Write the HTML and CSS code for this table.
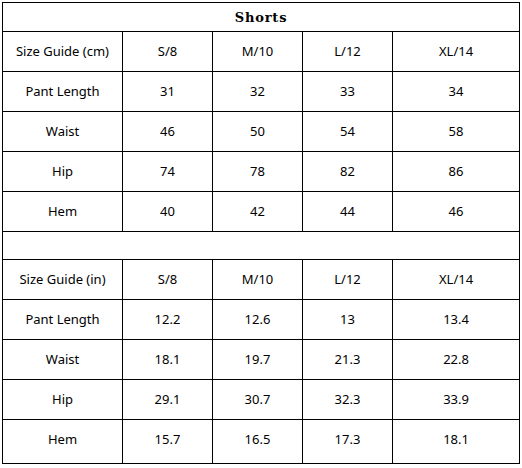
FILE: index.html
```html
<!DOCTYPE html>
<html>
<head>
<meta charset="utf-8">
<link rel="stylesheet" href="styles.css">
</head>
<body>
<div class="sheet">
<table class="size-table">
  <colgroup>
    <col class="c1"><col class="c2"><col class="c3"><col class="c4"><col class="c5">
  </colgroup>
  <tr class="title-row"><td colspan="5" class="title">Shorts</td></tr>
  <tr class="row"><td>Size Guide (cm)</td><td>S/8</td><td>M/10</td><td>L/12</td><td>XL/14</td></tr>
  <tr class="row"><td>Pant Length</td><td>31</td><td>32</td><td>33</td><td>34</td></tr>
  <tr class="row"><td>Waist</td><td>46</td><td>50</td><td>54</td><td>58</td></tr>
  <tr class="row"><td>Hip</td><td>74</td><td>78</td><td>82</td><td>86</td></tr>
  <tr class="row"><td>Hem</td><td>40</td><td>42</td><td>44</td><td>46</td></tr>
  <tr class="blank-row"><td colspan="5"></td></tr>
  <tr class="row"><td>Size Guide (in)</td><td>S/8</td><td>M/10</td><td>L/12</td><td>XL/14</td></tr>
  <tr class="row"><td>Pant Length</td><td>12.2</td><td>12.6</td><td>13</td><td>13.4</td></tr>
  <tr class="row"><td>Waist</td><td>18.1</td><td>19.7</td><td>21.3</td><td>22.8</td></tr>
  <tr class="row"><td>Hip</td><td>29.1</td><td>30.7</td><td>32.3</td><td>33.9</td></tr>
  <tr class="row last"><td>Hem</td><td>15.7</td><td>16.5</td><td>17.3</td><td>18.1</td></tr>
</table>
</div>
</body>
</html>
```

FILE: styles.css
```css
html, body {
  margin: 0;
  padding: 0;
  background: #ffffff;
}
.sheet {
  padding: 2px 0 0 2px;
}
.size-table {
  border-collapse: collapse;
  table-layout: fixed;
  width: 517px;
  font-family: "Noto Sans", "Open Sans", sans-serif;
  font-size: 13px;
  color: #000000;
}
.c1 { width: 120px; }
.c2 { width: 90px; }
.c3 { width: 90px; }
.c4 { width: 90px; }
.c5 { width: 127px; }
.size-table td {
  border: 1px solid #000000;
  text-align: center;
  vertical-align: middle;
  padding: 0 0 2px 0;
  line-height: 16px;
}
.title-row td { height: 26px; }
.size-table .title {
  font-family: "DejaVu Serif", "Liberation Serif", serif;
  font-weight: bold;
  font-size: 13px;
  letter-spacing: 0.8px;
  padding: 2px 0 0 0;
}
.row td { height: 37px; }
.blank-row td { height: 25px; }
.size-table .row.last td {
  height: 37px;
  padding-bottom: 6px;
}
```
